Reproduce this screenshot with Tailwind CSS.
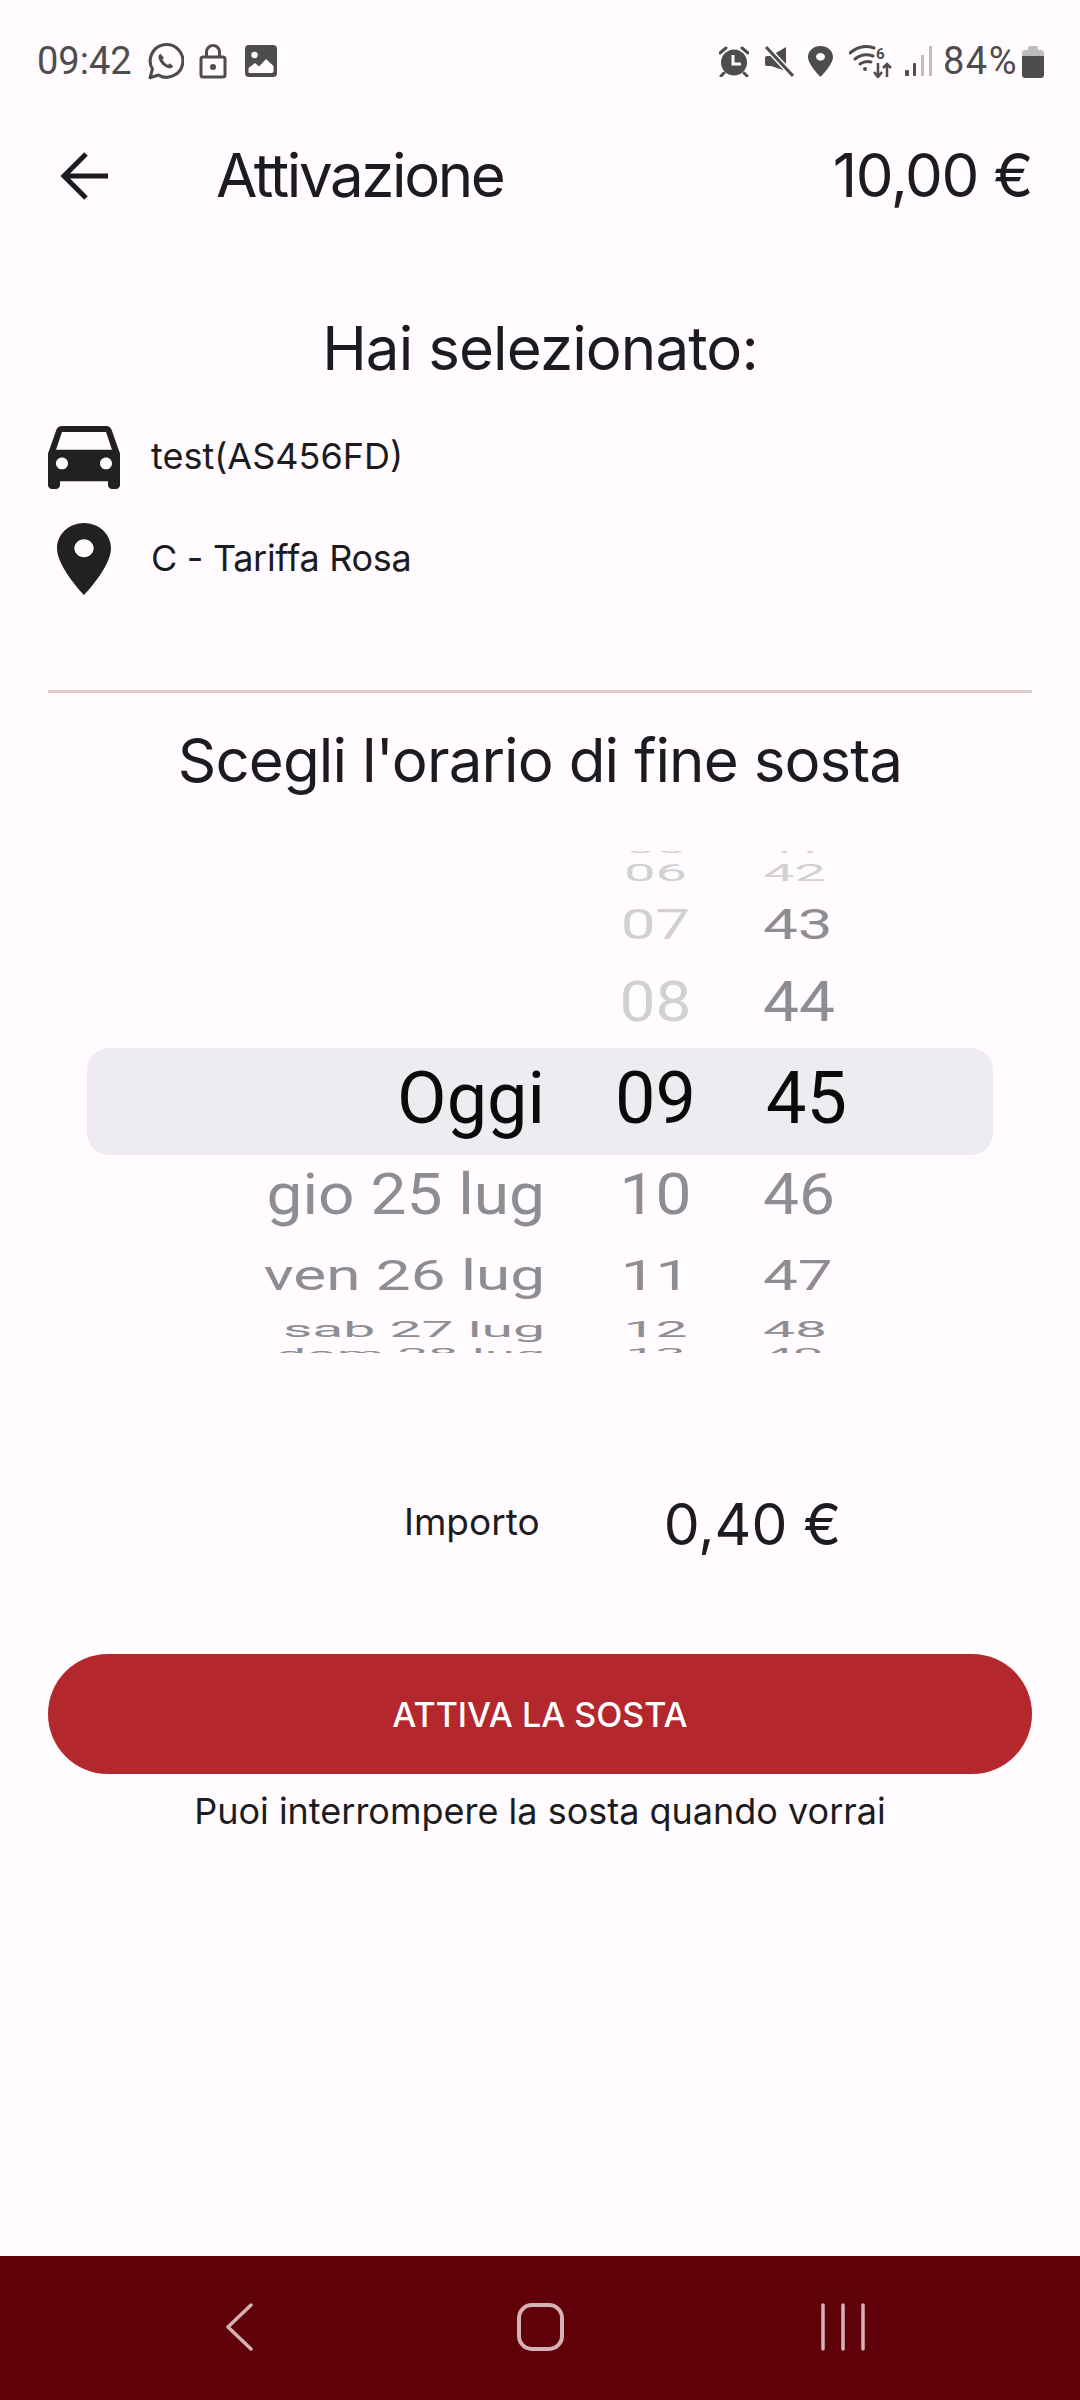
<!DOCTYPE html><html lang="en">
<head>
  <meta charset="UTF-8" />
  <meta name="viewport" content="width=device-width, initial-scale=1.0" />
  <title>Attivazione</title>
  <script src="https://cdn.jsdelivr.net/npm/@tailwindcss/browser@4"></script>
</head>
<body class="bg-[#fffbfe] text-[#1c1b1f] font-['Inter',sans-serif]">
  <div class="w-[1080px] h-[2400px] flex flex-col overflow-hidden">

    <!-- status bar -->
    <div class="h-[122px] flex items-center justify-between pl-[37px] pr-[36px] text-[#4d4d4d] font-['Roboto',sans-serif] text-[38px] shrink-0">
      <div class="flex items-center">
        <span class="leading-none">09:42</span>
        <svg class="ml-[15px] w-[37px] h-[37px]" viewBox="0 0 24 24" fill="none" stroke="#4d4d4d" stroke-width="2"><path d="M2 22.5l1.5-5.6A10.6 10.6 0 1 1 7.4 20.8z" stroke-linejoin="round"/><path d="M8.7 6.9c-.9.5-1.5 1.5-1.2 2.8.7 3 3.5 5.8 6.6 6.7 1.3.3 2.4-.3 2.9-1.3l-2.2-1.9-1.2 1c-1.5-.6-2.9-2-3.5-3.5l.9-1.2z" fill="#4d4d4d" stroke="none"/></svg>
        <svg class="ml-[15px] w-[28px] h-[35px]" viewBox="0 0 28 35" fill="none" stroke="#4d4d4d" stroke-width="3"><rect x="2" y="13" width="24" height="20" rx="2"/><path d="M7.5 13V8a6.5 6.5 0 0 1 13 0v5"/><circle cx="14" cy="23" r="3" fill="#4d4d4d" stroke="none"/></svg>
        <svg class="ml-[18px] w-[32px] h-[32px]" viewBox="0 0 32 32"><rect width="32" height="32" rx="4" fill="#4d4d4d"/><circle cx="9.500" cy="10" r="3.200" fill="#fffbfe"/><path d="M3.500 28v-5l6.500-5 4 3.500 7-7.500 7.500 7v5c0 1-.5 2-2 2h-21c-1.500 0-2-.5-2-.5z" fill="#fffbfe"/></svg>
      </div>
      <div class="flex items-center">
        <svg class="w-[30px] h-[31px]" viewBox="0 0 30 31"><circle cx="15" cy="16.500" r="13" fill="#4d4d4d"/><path d="M14 9v9h8" fill="none" stroke="#fffbfe" stroke-width="3"/><path d="M1 7l6-5M29 7l-6-5M5 27l-3 3M25 27l3 3" stroke="#4d4d4d" stroke-width="3" stroke-linecap="round"/></svg>
        <svg class="ml-[15px] w-[30px] h-[31px]" viewBox="0 0 30 31"><path d="M1 12c0-1 .5-2 2-2h4l15-9v24L7 20H3c-1.500 0-2-1-2-2z" fill="#4d4d4d"/><path d="M3 2l26 28" stroke="#fffbfe" stroke-width="6"/><path d="M2 1l27 29" stroke="#4d4d4d" stroke-width="3"/></svg>
        <svg class="ml-[14px] w-[25px] h-[31px]" viewBox="5 2 14 20" preserveAspectRatio="none"><path fill="#4d4d4d" d="M12 2C8.130 2 5 5.130 5 9c0 5.250 7 13 7 13s7-7.750 7-13c0-3.870-3.130-7-7-7zm0 9.500c-1.380 0-2.500-1.120-2.500-2.500s1.120-2.500 2.500-2.500 2.500 1.120 2.500 2.500-1.120 2.500-2.500 2.500z"/></svg>
        <svg class="ml-[16px] w-[44px] h-[33px]" viewBox="0 0 44 33" fill="none" stroke="#4d4d4d"><path d="M1 8C8 2 17 0 25 3M6 14c5-4 12-5 18-3M11 19c3-2 7-3 11-2" stroke-width="3" stroke-linecap="round"/><circle cx="16" cy="24" r="2" fill="#4d4d4d" stroke="none"/><text x="27" y="14" font-family="Roboto" font-size="15" font-weight="700" fill="#4d4d4d" stroke="none">6</text><path d="M29 18v14M25 27l4 5 4-5M38 32V19M34 23l4-4 4 4" stroke-width="2.500"/></svg>
        <svg class="ml-[11px] w-[28px] h-[30px]" viewBox="0 0 28 30"><rect x="1" y="24" width="4" height="6" rx="1" fill="#4d4d4d"/><rect x="9" y="17" width="3" height="13" rx="1" fill="#4d4d4d"/><rect x="17" y="9" width="3" height="21" fill="#bdbdbd"/><rect x="25" y="0" width="3" height="30" fill="#bdbdbd"/></svg>
        <span class="ml-[11px] leading-none tracking-[1.5px]">84%</span>
        <svg class="ml-[4px] w-[22px] h-[33px]" viewBox="0 0 22 33"><path d="M6 3c0-1.500 1-2 2-2h6c1 0 2 .5 2 2v2h3c1.500 0 3 1 3 3v3H0V8c0-2 1.500-3 3-3h3z" fill="#bdbdbd"/><path d="M0 11h22v19c0 2-1.500 3-3 3H3c-1.500 0-3-1-3-3z" fill="#4d4d4d"/></svg>
      </div>
    </div>

    <!-- header -->
    <div class="h-[108px] flex items-center pl-[60px] pr-[48px] shrink-0">
      <svg class="w-[50px] h-[50px]" viewBox="0 0 50 50" fill="none" stroke="#1c1b1f" stroke-width="5"><path d="M48 25H4M26 3L4 25l22 22"/></svg>
      <span class="ml-[106px] mb-[3px] text-[60px] tracking-[-2.4px] leading-none">Attivazione</span>
      <span class="ml-auto mb-[3px] text-[60px] tracking-[-1.4px] leading-none">10,00 €</span>
    </div>

    <!-- selection -->
    <div class="mt-[88px] text-center text-[60px] tracking-[-0.9px] leading-none shrink-0">Hai selezionato:</div>
    <div class="mt-[43px] px-[48px] flex flex-col gap-[30px] shrink-0">
      <div class="h-[72px] flex items-center gap-[31px] text-[36px]">
        <svg class="w-[72px] h-[63px]" viewBox="3 5 18 16" preserveAspectRatio="none"><path fill="#212121" d="M18.920 6.010C18.720 5.420 18.160 5 17.500 5h-11c-.660 0-1.210.420-1.420 1.010L3 12v8c0 .550.450 1 1 1h1c.550 0 1-.450 1-1v-1h12v1c0 .550.450 1 1 1h1c.550 0 1-.450 1-1v-8l-2.080-5.990zM6.500 16c-.830 0-1.500-.670-1.500-1.500S5.670 13 6.500 13s1.500.670 1.500 1.500S7.330 16 6.500 16zm11 0c-.830 0-1.500-.670-1.500-1.500s.670-1.500 1.500-1.500 1.500.670 1.500 1.500-.670 1.500-1.500 1.500zM5 11l1.500-4.500h11L19 11H5z"/></svg>
        <span class="leading-none mb-[3px]">test(AS456FD)</span>
      </div>
      <div class="h-[72px] flex items-center gap-[31px] text-[36px]">
        <div class="w-[72px] flex justify-center">
          <svg class="w-[54px] h-[72px]" viewBox="5 2 14 20" preserveAspectRatio="none"><path fill="#212121" d="M12 2C8.130 2 5 5.130 5 9c0 5.250 7 13 7 13s7-7.750 7-13c0-3.870-3.130-7-7-7zm0 9.500c-1.380 0-2.500-1.120-2.500-2.500s1.120-2.500 2.500-2.500 2.500 1.120 2.500 2.500-1.120 2.500-2.500 2.500z"/></svg>
        </div>
        <span class="leading-none mb-[3px] tracking-[-0.3px]">C - Tariffa Rosa</span>
      </div>
    </div>

    <div class="mt-[95px] mx-[48px] h-[3px] bg-[#dccdc8] shrink-0"></div>
    <div class="mt-[37px] text-center text-[60px] tracking-[-0.9px] leading-none shrink-0">Scegli l'orario di fine sosta</div>

    <!-- time picker -->
    <div class="relative mt-[61px] h-[502px] overflow-hidden font-['Roboto',sans-serif] leading-none text-[#8e8e92] shrink-0">
      <div class="absolute left-[87px] top-[197px] w-[906px] h-[107px] rounded-[22px] bg-[#eeecf0]"></div>
      <div class="relative -mt-[17px]">
        <div class="h-[28px] grid grid-cols-[545px_221px_1fr] grid-rows-[minmax(0,1fr)] items-center text-[54px]">
          <span></span><span class="justify-self-center block scale-y-[0.3] text-[#d1d1d4]">05</span><span class="-ml-[3px] block scale-y-[0.3] text-[#d1d1d4]">41</span>
        </div>
        <div class="h-[22px] grid grid-cols-[545px_221px_1fr] grid-rows-[minmax(0,1fr)] items-center text-[56px]">
          <span></span><span class="justify-self-center block scale-y-[0.42] text-[#d1d1d4]">06</span><span class="-ml-[3px] block scale-y-[0.42] text-[#d1d1d4]">42</span>
        </div>
        <div class="h-[80px] grid grid-cols-[545px_221px_1fr] grid-rows-[minmax(0,1fr)] items-center text-[62px]">
          <span></span><span class="justify-self-center block scale-y-[0.7] text-[#d1d1d4]">07</span><span class="-ml-[3px] block scale-y-[0.7]">43</span>
        </div>
        <div class="h-[78px] grid grid-cols-[545px_221px_1fr] grid-rows-[minmax(0,1fr)] items-center text-[64px]">
          <span></span><span class="justify-self-center block scale-y-[0.88] text-[#d1d1d4]">08</span><span class="-ml-[3px] block scale-y-[0.88]">44</span>
        </div>
        <div class="h-[114px] grid grid-cols-[545px_221px_1fr] grid-rows-[minmax(0,1fr)] items-center text-[72px] text-[#0a0a0a]">
          <span class="justify-self-end">Oggi</span><span class="justify-self-center">09</span><span>45</span>
        </div>
        <div class="h-[78px] grid grid-cols-[545px_221px_1fr] grid-rows-[minmax(0,1fr)] items-center text-[64px]">
          <span class="justify-self-end block scale-y-[0.9]">gio 25 lug</span><span class="justify-self-center block scale-y-[0.9]">10</span><span class="-ml-[3px] block scale-y-[0.9]">46</span>
        </div>
        <div class="h-[84px] grid grid-cols-[545px_221px_1fr] grid-rows-[minmax(0,1fr)] items-center text-[62px]">
          <span class="justify-self-end block scale-y-[0.68]">ven 26 lug</span><span class="justify-self-center block scale-y-[0.68]">11</span><span class="-ml-[3px] block scale-y-[0.68]">47</span>
        </div>
        <div class="h-[22px] grid grid-cols-[545px_221px_1fr] grid-rows-[minmax(0,1fr)] items-center text-[57px]">
          <span class="justify-self-end block scale-y-[0.4]">sab 27 lug</span><span class="justify-self-center block scale-y-[0.4]">12</span><span class="-ml-[3px] block scale-y-[0.4]">48</span>
        </div>
        <div class="h-[30px] grid grid-cols-[545px_221px_1fr] grid-rows-[minmax(0,1fr)] items-center text-[54px]">
          <span class="justify-self-end block scale-y-[0.3]">dom 28 lug</span><span class="justify-self-center block scale-y-[0.3]">13</span><span class="-ml-[3px] block scale-y-[0.3]">49</span>
        </div>
      </div>
    </div>

    <!-- amount -->
    <div class="mt-[141px] h-[60px] flex items-center shrink-0">
      <span class="ml-[404px] mb-[6px] text-[37px] leading-none">Importo</span>
      <span class="ml-[124px] text-[57px] leading-none">0,40 €</span>
    </div>

    <div class="mt-[100px] mx-[48px] h-[120px] rounded-full bg-[#b3272d] flex items-center justify-center text-white text-[34px] font-medium shrink-0">ATTIVA LA SOSTA</div>
    <div class="mt-[19px] text-center text-[36px] leading-none shrink-0">Puoi interrompere la sosta quando vorrai</div>

    <!-- nav bar -->
    <div class="mt-auto h-[144px] pb-[2px] bg-[#600008] flex items-center pl-[225px] shrink-0">
      <svg class="w-[28px] h-[50px]" viewBox="0 0 28 50" fill="none" stroke="#d4b2b5" stroke-width="3.5" stroke-linecap="round" stroke-linejoin="round"><path d="M26 3L3 25l23 22"/></svg>
      <svg class="ml-[264px] w-[47px] h-[48px]" viewBox="0 0 47 48" fill="none" stroke="#d4b2b5" stroke-width="4"><rect x="2" y="2" width="43" height="44" rx="13"/></svg>
      <svg class="ml-[256px] w-[46px] h-[48px]" viewBox="0 0 46 48" fill="none" stroke="#d4b2b5" stroke-width="3.5" stroke-linecap="round"><path d="M3 2v44M23 2v44M43 2v44"/></svg>
    </div>
  </div>
</body>
</html>
